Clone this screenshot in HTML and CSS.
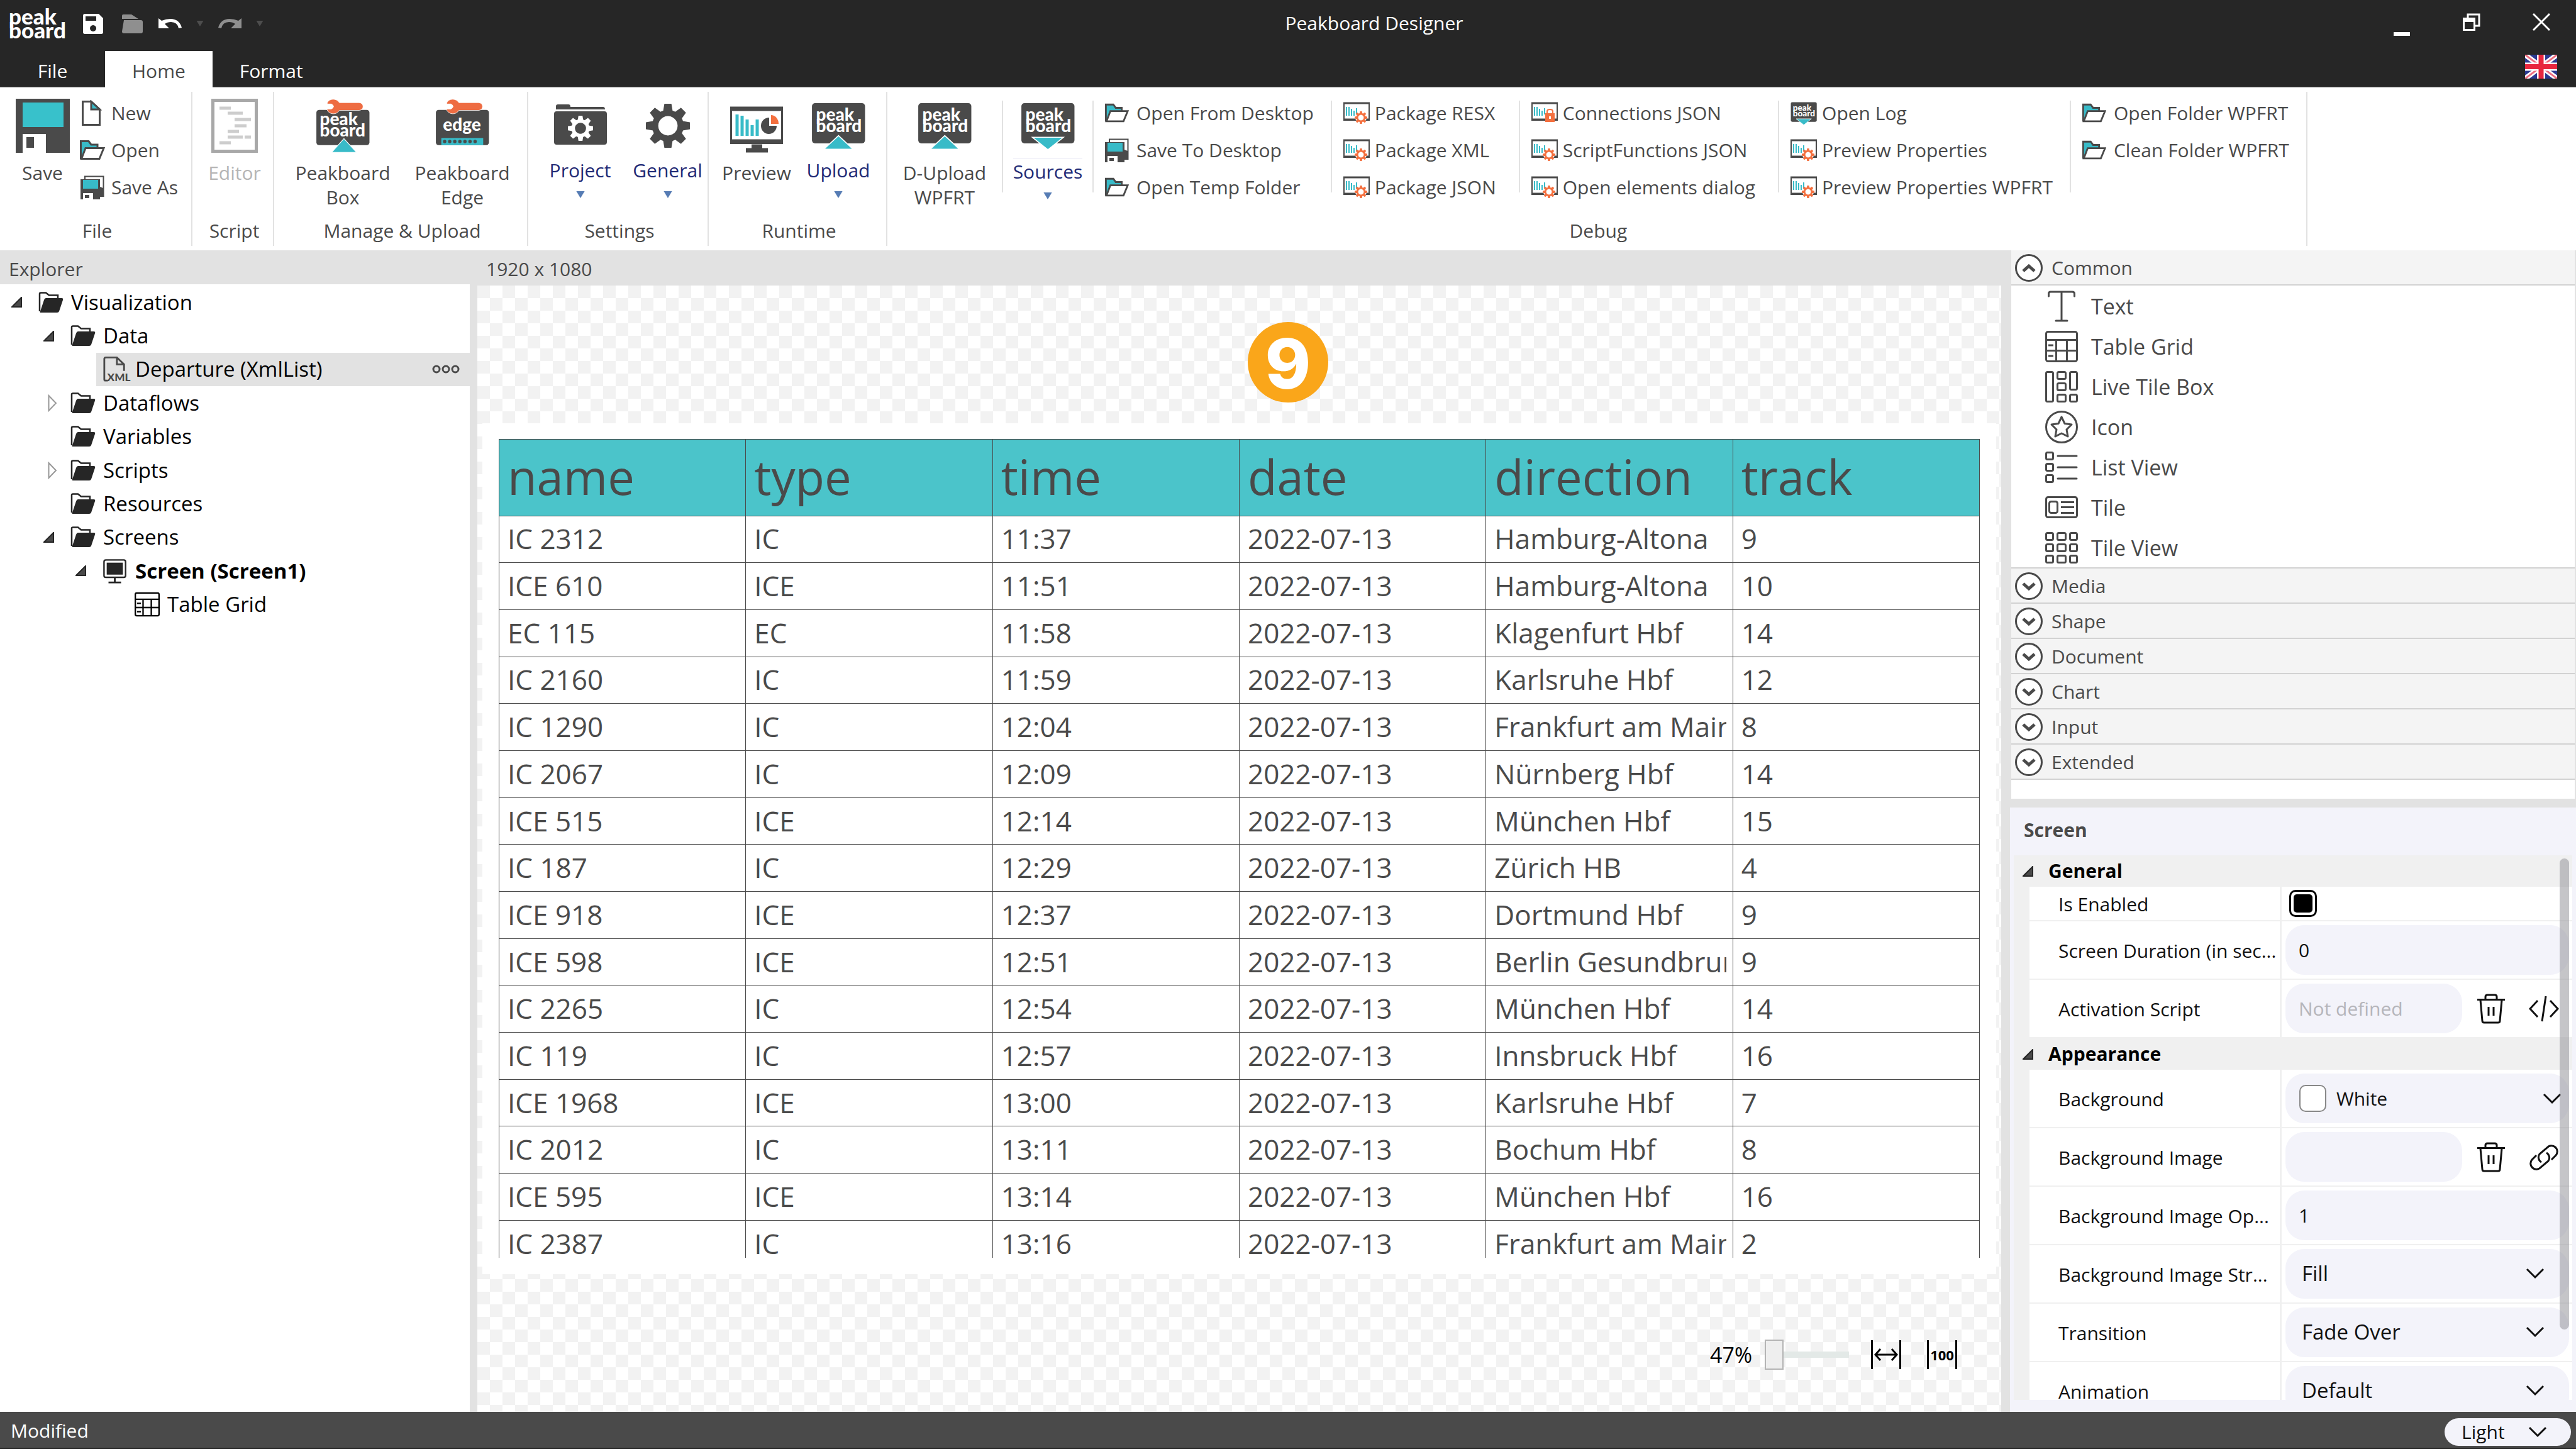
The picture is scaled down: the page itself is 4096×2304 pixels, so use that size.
FILE: index.html
```html
<!DOCTYPE html>
<html lang="en">
<head>
<meta charset="utf-8">
<title>Peakboard Designer</title>
<link rel="stylesheet" href="styles.css">
</head>
<body>
<svg class="sprite" aria-hidden="true">
  <symbol id="logo" viewBox="0 0 92 50">
    <g class="logo-text"><text x="-1" y="26">peak</text><text x="-1" y="48">board</text></g>
  </symbol>
  <symbol id="floppy-white" viewBox="0 0 32 32"><path fill="#fff" fill-rule="evenodd" d="M3 0H25L32 7V29Q32 32 29 32H3Q0 32 0 29V3Q0 0 3 0ZM4 4V11H21V4ZM16 18A5 5 0 1 0 16.100 18Z"/></symbol>
  <symbol id="doc-gray" viewBox="0 0 33 32"><path fill="#8f8f8f" d="M0 3Q0 1 2 1H15L26 8H0ZM3 10H30Q33 10 33 13V28Q33 31 30 31H3Q0 31 0 28Z"/></symbol>
  <symbol id="undo" viewBox="0 0 37 17"><path fill="currentColor" d="M0 0L5 4Q12 1 19 1Q33 1 37 15L32 16Q30 6 20 6Q14 6 10 9L17 16H0Z"/></symbol>
  <symbol id="tri-down" viewBox="0 0 12 10"><path fill="currentColor" d="M0 0H12L6 10Z"/></symbol>
  <symbol id="gear" viewBox="-50 -50 100 100">
    <g fill="currentColor"><path fill-rule="evenodd" d="M0-36A36 36 0 1 1-.1-36ZM0-22A22 22 0 1 0 .1-22Z"/>
    <path id="tooth" d="M-11-32L-8-50H8L11-32Z"/><use href="#tooth" transform="rotate(45)"/><use href="#tooth" transform="rotate(90)"/><use href="#tooth" transform="rotate(135)"/><use href="#tooth" transform="rotate(180)"/><use href="#tooth" transform="rotate(225)"/><use href="#tooth" transform="rotate(270)"/><use href="#tooth" transform="rotate(315)"/></g>
  </symbol>
  <symbol id="save-big" viewBox="0 0 86 86"><path fill="#4a4a4a" d="M0 0H86V86H48V56H11V86H0Z"/><rect x="11" y="6" width="65" height="39" fill="#38c1cb"/><rect x="17" y="61" width="12" height="17" fill="#4a4a4a"/></symbol>
  <symbol id="new" viewBox="0 0 40 42"><path d="M4.500 2.500H18L31.500 15V39.500H4.500Z" fill="#fff" stroke="#4a4a4a" stroke-width="3"/><path d="M18 2.500V15H31.500Z" fill="#38bbc8" stroke="#4a4a4a" stroke-width="3"/></symbol>
  <symbol id="open" viewBox="0 0 40 32"><path d="M1.500 30V1.500H14L18 7H28V13" fill="#38bbc8" stroke="#4a4a4a" stroke-width="3"/><path d="M9 12.500H38L31 29.500H2.500Z" fill="#fff" stroke="#4a4a4a" stroke-width="3"/></symbol>
  <symbol id="save-as" viewBox="0 0 38 38"><path d="M7 7V1.500H36.500V33H31" fill="#fff" stroke="#4a4a4a" stroke-width="2"/><path fill="#4a4a4a" d="M0 6H31V18L36 20V33H31V38H20V28H4V38H0Z"/><rect x="4" y="7" width="24" height="14" fill="#38bbc8"/><rect x="7" y="31" width="7" height="5" fill="#4a4a4a"/></symbol>
  <symbol id="script-page" viewBox="0 0 74 86"><rect x="2.500" y="2.500" width="69" height="81" fill="#fff" stroke="#a8a8a8" stroke-width="5"/><path stroke="#cdcdcd" stroke-width="5" d="M13 15H31M26 23H50M37 33H63M37 43H56M26 52H44M26 61H50M53 61H63M13 70H31"/></symbol>
  <symbol id="wrench" viewBox="0 0 220 90"><path fill="#ee6c42" stroke="#fff" stroke-width="3" d="M5 26Q16 3 42 3Q66 4 78 23H195Q218 26 218 46Q218 66 195 69H78Q66 89 42 89Q16 88 5 66L8 61H30Q42 56 44 46Q42 35 30 31H8Z"/></symbol>
  <symbol id="pb-box" viewBox="84 50 320 320"><rect x="88" y="116" width="314" height="208" rx="16" fill="#4a4a4a"/><use href="#wrench" x="146" y="50" width="220" height="90"/><g class="box-text"><text x="108" y="208">peak</text><text x="108" y="273">board</text></g><path d="M251 286L179 367H325Z" fill="#38bbc8" stroke="#fff" stroke-width="4"/></symbol>
  <symbol id="pb-edge" viewBox="84 50 320 320"><rect x="88" y="116" width="314" height="208" rx="16" fill="#4a4a4a"/><use href="#wrench" x="146" y="50" width="220" height="90"/><g class="box-text"><text x="130" y="238">edge</text></g><path fill="#38bbc8" d="M120 283H368V324H120Z"/><path d="M140 303H350" stroke="#4a4a4a" stroke-width="20" stroke-linecap="round" stroke-dasharray="0 30"/></symbol>
  <symbol id="pb-up" viewBox="84 50 320 320"><rect x="88" y="76" width="314" height="238" rx="18" fill="#4a4a4a"/><g class="box-text"><text x="112" y="180">peak</text><text x="112" y="248">board</text></g><path d="M245 268L158 349H332Z" fill="#38bbc8" stroke="#fff" stroke-width="6"/></symbol>
  <symbol id="pb-down" viewBox="84 50 320 320"><rect x="88" y="76" width="314" height="238" rx="18" fill="#4a4a4a"/><g class="box-text"><text x="112" y="180">peak</text><text x="112" y="248">board</text></g><path d="M153 278H337L245 352Z" fill="#38bbc8" stroke="#fff" stroke-width="6"/></symbol>
  <symbol id="project" viewBox="0 0 84 86"><path fill="#4a4a4a" d="M3 17V12Q3 9 6 9H23Q26 9 26 13H78Q81 13 81 17ZM4 20H80Q84 20 84 24V69Q84 73 80 73H4Q0 73 0 69V24Q0 20 4 20Z"/><g color="#fff"><use href="#gear" x="22" y="27" width="40" height="40"/></g></symbol>
  <symbol id="general" viewBox="0 0 84 86"><g color="#4a4a4a"><use href="#gear" x="7" y="8" width="70" height="70"/></g></symbol>
  <symbol id="preview" viewBox="0 0 84 86"><rect x="1.500" y="15.500" width="81" height="55" fill="#fff" stroke="#4a4a4a" stroke-width="3"/><path stroke="#4a4a4a" stroke-width="7" d="M0 68H84M0 16H84M34 76H51M25 82H60"/><path stroke="#38bbc8" stroke-width="5" d="M11 25V59M19 27V59M27 33V59M35 42V59M43 33V59"/><path fill="#4a4a4a" d="M62 30V43H74A12.500 13 0 1 1 62 30Z"/><path fill="#f4703f" d="M65 26A12 14 0 0 1 77 40H65Z"/></symbol>
  <symbol id="report" viewBox="0 0 42 36"><rect x="1" y="2" width="40" height="27" fill="#fff" stroke="#4a4a4a" stroke-width="2"/><path stroke="#4a4a4a" stroke-width="3" d="M0 2H42M0 28H42"/><path stroke="#38bbc8" stroke-width="2" d="M5 8V22M9 8V22M13 11V22M17 14V22M21 10V20"/></symbol>
  <symbol id="report-gear" viewBox="0 0 42 36"><use href="#report" width="42" height="36"/><circle cx="28" cy="25" r="9" fill="#fff"/><g color="#f4703f"><use href="#gear" x="18" y="15" width="20" height="20"/></g></symbol>
  <symbol id="report-lock" viewBox="0 0 42 36"><use href="#report" width="42" height="36"/><rect x="22" y="18" width="15" height="14" fill="#f4703f"/><path d="M25 19V15Q25 12 29.500 12Q34 12 34 15V19" fill="none" stroke="#f4703f" stroke-width="2"/><rect x="28" y="23" width="3" height="4" fill="#fff"/></symbol>
  <symbol id="folder" viewBox="0 0 40 34"><path d="M2 31V3Q2 1.500 4 1.500H12L17 5.500H31V11" fill="none" stroke="#262626" stroke-width="2.500"/><path fill="#262626" d="M12 10H37Q40 10 39 13L33 31Q32 33 30 33H4Q2 33 3 31L9 13Q10 10 12 10Z"/></symbol>
  <symbol id="xml-doc" viewBox="0 0 40 42"><path d="M8 40H4Q2 40 2 38V4Q2 1.500 4.500 1.500H23L35 13V24M23 2V13H35" fill="none" stroke="#4a4a4a" stroke-width="3"/><text class="xml-text" x="7" y="41">XML</text></symbol>
  <symbol id="screen" viewBox="0 0 40 42"><rect x="1.500" y="2.500" width="36" height="29" rx="3" fill="none" stroke="#262626" stroke-width="2.500"/><rect x="6" y="7" width="27" height="20" fill="#262626"/><path stroke="#262626" stroke-width="3" d="M19.500 32V40M9 40H30"/></symbol>
  <symbol id="table" viewBox="0 0 52 50"><g fill="none" stroke="currentColor" stroke-width="3"><rect x="1.500" y="1.500" width="49" height="47" rx="3"/><path d="M2 14.500H50M2 31.500H50M17.500 15V48M34.500 15V48M5 23H13M5 40H13"/></g></symbol>
  <symbol id="text-t" viewBox="0 0 52 50"><path fill="none" stroke="currentColor" stroke-width="3" stroke-linecap="round" d="M5.500 9V5Q5.500 2 8.500 2H43Q46.500 2 46.500 5V9M26 2V48M17 48H35"/></symbol>
  <symbol id="live-tile" viewBox="0 0 52 50"><g fill="none" stroke="currentColor" stroke-width="3"><rect x="1.500" y="1.500" width="11" height="47" rx="2"/><rect x="19.500" y="1.500" width="13" height="11" rx="2"/><rect x="19.500" y="19.500" width="13" height="11" rx="2"/><rect x="19.500" y="37.500" width="13" height="11" rx="2"/><rect x="39.500" y="1.500" width="11" height="28" rx="2"/><rect x="39.500" y="37.500" width="11" height="11" rx="2"/></g></symbol>
  <symbol id="star" viewBox="0 0 52 52"><g fill="none" stroke="currentColor" stroke-width="3"><circle cx="26" cy="26" r="24.500"/><path stroke-linejoin="round" d="M26 10L31 20.500L42 22L34 30L36 41L26 36L16 41L18 30L10 22L21 20.500Z"/></g></symbol>
  <symbol id="list-view" viewBox="0 0 52 50"><g fill="none" stroke="currentColor" stroke-width="3"><rect x="1.500" y="1.500" width="11" height="11" rx="2"/><rect x="1.500" y="19.500" width="11" height="11" rx="2"/><rect x="1.500" y="37.500" width="11" height="11" rx="2"/><path stroke-linecap="round" d="M20 7H50M20 25H50M20 43H50"/></g></symbol>
  <symbol id="tile" viewBox="0 0 52 50"><g fill="none" stroke="currentColor" stroke-width="3"><rect x="1.500" y="8.500" width="49" height="32" rx="3"/><rect x="6.500" y="15.500" width="13" height="18" rx="3"/><path d="M25 16.500H46M25 24.500H46M25 33.500H46"/></g></symbol>
  <symbol id="tile-view" viewBox="0 0 52 50"><g fill="none" stroke="currentColor" stroke-width="3"><rect x="1.500" y="1.500" width="11" height="11" rx="2"/><rect x="1.500" y="19.500" width="11" height="11" rx="2"/><rect x="1.500" y="37.500" width="11" height="11" rx="2"/><rect x="19.500" y="1.500" width="13" height="11" rx="2"/><rect x="19.500" y="19.500" width="13" height="11" rx="2"/><rect x="19.500" y="37.500" width="13" height="11" rx="2"/><rect x="39.500" y="1.500" width="11" height="11" rx="2"/><rect x="39.500" y="19.500" width="11" height="11" rx="2"/><rect x="39.500" y="37.500" width="11" height="11" rx="2"/></g></symbol>
  <symbol id="circle-down" viewBox="0 0 44 44"><circle cx="22" cy="22" r="20.500" fill="#fff" stroke="#4a4a4a" stroke-width="3"/><path d="M13 18L22 26L31 18" fill="none" stroke="#4a4a4a" stroke-width="5"/></symbol>
  <symbol id="circle-up" viewBox="0 0 44 44"><circle cx="22" cy="22" r="20.500" fill="#fff" stroke="#4a4a4a" stroke-width="3"/><path d="M13 27L22 19L31 27" fill="none" stroke="#4a4a4a" stroke-width="5"/></symbol>
  <symbol id="chevron" viewBox="0 0 30 18"><path d="M2 2L15 15L28 2" fill="none" stroke="#111" stroke-width="3"/></symbol>
  <symbol id="trash" viewBox="0 0 44 48"><g fill="none" stroke="#111" stroke-width="3"><path d="M0 9.500H44M13 9V5Q13 2 16 2H28Q31 2 31 5V9M5 10L8 43Q8 46 11 46H33Q36 46 36 43L39 10M18 21V35M26 21V35"/></g></symbol>
  <symbol id="code" viewBox="0 0 48 44"><path d="M14 9L2 22L14 35M27 2L21 42M34 9L46 22L34 35" fill="none" stroke="#111" stroke-width="3"/></symbol>
  <symbol id="link" viewBox="0 0 48 44"><g fill="none" stroke="#111" stroke-width="3"><path d="M20 30A9 9 0 0 1 17 17L29 7A9 9 0 0 1 43 19L36 26M28 15A9 9 0 0 1 31 28L19 38A9 9 0 0 1 5 26L12 19"/></g></symbol>
  <symbol id="fit" viewBox="0 0 48 46"><path d="M1.500 0V46M46.500 0V46M7 23H41M15 14L7 23L15 32M33 14L41 23L33 32" fill="none" stroke="#000" stroke-width="3"/></symbol>
  <symbol id="open-node" viewBox="0 0 17 17"><path d="M16 1V16H1Z" fill="#4a4a4a" stroke="#262626" stroke-width="2"/></symbol>
  <symbol id="closed-node" viewBox="-7 0 22 28"><path d="M1.500 2V26L13 14Z" fill="#fff" stroke="#999" stroke-width="2"/></symbol>
</svg>

<header class="titlebar">
  <div class="quick-access">
    <svg class="logo" role="img" aria-label="Peakboard"><use href="#logo"/></svg>
    <div class="file-tools">
      <button aria-label="Save"><svg width="32" height="32"><use href="#floppy-white"/></svg></button>
      <button aria-label="Close file"><svg width="33" height="32"><use href="#doc-gray"/></svg></button>
    </div>
    <div class="history-tools">
      <button aria-label="Undo"><svg width="37" height="17"><use href="#undo"/></svg></button>
      <button class="dim" aria-label="Undo list"><svg width="12" height="9"><use href="#tri-down"/></svg></button>
      <button class="redo" aria-label="Redo"><svg width="37" height="17"><use href="#undo"/></svg></button>
      <button class="dim" aria-label="Redo list"><svg width="12" height="9"><use href="#tri-down"/></svg></button>
    </div>
  </div>
  <h1>Peakboard Designer</h1>
  <div class="window-buttons">
    <button aria-label="Minimize"><svg width="28" height="28" viewBox="0 0 28 28"><path d="M1 33H27" stroke="#fff" stroke-width="6"/></svg></button>
    <button aria-label="Restore"><svg width="28" height="28" viewBox="0 0 28 28"><path d="M8 8V2H26V20H20" fill="none" stroke="#fff" stroke-width="3"/><path d="M0 7H20V28H0ZM3 14V25H17V14Z" fill="#fff" fill-rule="evenodd"/></svg></button>
    <button aria-label="Close"><svg width="28" height="28" viewBox="0 0 28 28"><path d="M1 1L27 27M27 1L1 27" stroke="#fff" stroke-width="3"/></svg></button>
  </div>
</header>

<nav class="tabs">
  <button class="tab tab-file">File</button>
  <button class="tab active">Home</button>
  <button class="tab">Format</button>
  <button class="language" aria-label="English"><svg width="51" height="38" viewBox="0 0 51 38"><rect width="51" height="38" fill="#2b3990"/><path d="M0 0L51 38M51 0L0 38" stroke="#fff" stroke-width="8"/><path d="M0 0L51 38M51 0L0 38" stroke="#ed6d80" stroke-width="3"/><path d="M25.500 0V38M0 19H51" stroke="#fff" stroke-width="13"/><path d="M25.500 0V38M0 19H51" stroke="#e8273f" stroke-width="8"/></svg></button>
</nav>

<section class="ribbon">
  <div class="group group-file">
    <div class="group-body">
      <button class="large"><svg class="big"><use href="#save-big"/></svg><span>Save</span></button>
      <div class="stack">
        <button class="small"><svg width="40" height="42"><use href="#new"/></svg>New</button>
        <button class="small"><svg width="40" height="32"><use href="#open"/></svg>Open</button>
        <button class="small"><svg width="40" height="38"><use href="#save-as"/></svg>Save As</button>
      </div>
    </div>
    <h2>File</h2>
  </div>
  <div class="group group-script">
    <div class="group-body"><button class="large" disabled><svg class="big"><use href="#script-page"/></svg><span>Editor</span></button></div>
    <h2>Script</h2>
  </div>
  <div class="group group-manage">
    <div class="group-body">
      <button class="large"><svg class="big"><use href="#pb-box"/></svg><span>Peakboard<br>Box</span></button>
      <button class="large"><svg class="big"><use href="#pb-edge"/></svg><span>Peakboard<br>Edge</span></button>
    </div>
    <h2>Manage &amp; Upload</h2>
  </div>
  <div class="group group-settings">
    <div class="group-body">
      <button class="large menu"><svg class="big"><use href="#project"/></svg><span>Project</span><svg class="caret"><use href="#tri-down"/></svg></button>
      <button class="large menu"><svg class="big"><use href="#general"/></svg><span>General</span><svg class="caret"><use href="#tri-down"/></svg></button>
    </div>
    <h2>Settings</h2>
  </div>
  <div class="group group-runtime">
    <div class="group-body">
      <button class="large"><svg class="big"><use href="#preview"/></svg><span>Preview</span></button>
      <button class="large menu"><svg class="big"><use href="#pb-up"/></svg><span>Upload</span><svg class="caret"><use href="#tri-down"/></svg></button>
    </div>
    <h2>Runtime</h2>
  </div>
  <div class="group group-debug">
    <div class="group-body">
      <button class="large wide"><svg class="big"><use href="#pb-up"/></svg><span>D-Upload<br>WPFRT</span></button>
      <span class="rule"></span>
      <button class="large menu hovered"><svg class="big"><use href="#pb-down"/></svg><span>Sources</span><svg class="caret"><use href="#tri-down"/></svg></button>
      <span class="rule"></span>
      <div class="stack">
        <button class="small"><svg width="38" height="32"><use href="#open"/></svg>Open From Desktop</button>
        <button class="small"><svg width="38" height="38"><use href="#save-as"/></svg>Save To Desktop</button>
        <button class="small"><svg width="38" height="32"><use href="#open"/></svg>Open Temp Folder</button>
      </div>
      <span class="rule"></span>
      <div class="stack reports">
        <button class="small"><svg width="42" height="36"><use href="#report-gear"/></svg>Package RESX</button>
        <button class="small"><svg width="42" height="36"><use href="#report-gear"/></svg>Package XML</button>
        <button class="small"><svg width="42" height="36"><use href="#report-gear"/></svg>Package JSON</button>
      </div>
      <span class="rule"></span>
      <div class="stack reports">
        <button class="small"><svg width="42" height="36"><use href="#report-lock"/></svg>Connections JSON</button>
        <button class="small"><svg width="42" height="36"><use href="#report-gear"/></svg>ScriptFunctions JSON</button>
        <button class="small"><svg width="42" height="36"><use href="#report-gear"/></svg>Open elements dialog</button>
      </div>
      <span class="rule"></span>
      <div class="stack">
        <button class="small"><svg width="42" height="42"><use href="#pb-down"/></svg>Open Log</button>
        <button class="small"><svg width="42" height="36"><use href="#report-gear"/></svg>Preview Properties</button>
        <button class="small"><svg width="42" height="36"><use href="#report-gear"/></svg>Preview Properties WPFRT</button>
      </div>
      <span class="rule"></span>
      <div class="stack last">
        <button class="small"><svg width="38" height="32"><use href="#open"/></svg>Open Folder WPFRT</button>
        <button class="small"><svg width="38" height="32"><use href="#open"/></svg>Clean Folder WPFRT</button>
      </div>
    </div>
    <h2>Debug</h2>
  </div>
</section>

<main class="workspace">
  <aside class="explorer">
    <h2 class="pane-title">Explorer</h2>
    <ul class="tree">
      <li><span class="toggle"><svg width="17" height="17"><use href="#open-node"/></svg></span><svg class="node"><use href="#folder"/></svg>Visualization</li>
      <li class="l1"><span class="toggle"><svg width="17" height="17"><use href="#open-node"/></svg></span><svg class="node"><use href="#folder"/></svg>Data</li>
      <li class="l2 selected"><span class="toggle"></span><div class="row"><svg class="node"><use href="#xml-doc"/></svg>Departure (XmlList)<button class="more" aria-label="More"><svg width="44" height="16" viewBox="0 0 44 16"><g fill="none" stroke="#4a4a4a" stroke-width="3"><circle cx="7" cy="8" r="5"/><circle cx="22" cy="8" r="5"/><circle cx="37" cy="8" r="5"/></g></svg></button></div></li>
      <li class="l1"><span class="toggle"><svg width="22" height="28"><use href="#closed-node"/></svg></span><svg class="node"><use href="#folder"/></svg>Dataflows</li>
      <li class="l1"><span class="toggle"></span><svg class="node"><use href="#folder"/></svg>Variables</li>
      <li class="l1"><span class="toggle"><svg width="22" height="28"><use href="#closed-node"/></svg></span><svg class="node"><use href="#folder"/></svg>Scripts</li>
      <li class="l1"><span class="toggle"></span><svg class="node"><use href="#folder"/></svg>Resources</li>
      <li class="l1"><span class="toggle"><svg width="17" height="17"><use href="#open-node"/></svg></span><svg class="node"><use href="#folder"/></svg>Screens</li>
      <li class="l2 bold"><span class="toggle"><svg width="17" height="17"><use href="#open-node"/></svg></span><svg class="node"><use href="#screen"/></svg>Screen (Screen1)</li>
      <li class="l3"><span class="toggle"></span><svg class="node"><use href="#table"/></svg>Table Grid</li>
    </ul>
  </aside>

  <section class="canvas">
    <h2 class="pane-title">1920 x 1080</h2>
    <div class="stage">
      <div class="artboard">
        <div class="grid-clip">
          <table class="departures">
            <thead><tr><th>name</th><th>type</th><th>time</th><th>date</th><th>direction</th><th>track</th></tr></thead>
            <tbody>
              <tr><td>IC 2312</td><td>IC</td><td>11:37</td><td>2022-07-13</td><td>Hamburg-Altona</td><td>9</td></tr>
              <tr><td>ICE 610</td><td>ICE</td><td>11:51</td><td>2022-07-13</td><td>Hamburg-Altona</td><td>10</td></tr>
              <tr><td>EC 115</td><td>EC</td><td>11:58</td><td>2022-07-13</td><td>Klagenfurt Hbf</td><td>14</td></tr>
              <tr><td>IC 2160</td><td>IC</td><td>11:59</td><td>2022-07-13</td><td>Karlsruhe Hbf</td><td>12</td></tr>
              <tr><td>IC 1290</td><td>IC</td><td>12:04</td><td>2022-07-13</td><td><div>Frankfurt am Main</div></td><td>8</td></tr>
              <tr><td>IC 2067</td><td>IC</td><td>12:09</td><td>2022-07-13</td><td>Nürnberg Hbf</td><td>14</td></tr>
              <tr><td>ICE 515</td><td>ICE</td><td>12:14</td><td>2022-07-13</td><td>München Hbf</td><td>15</td></tr>
              <tr><td>IC 187</td><td>IC</td><td>12:29</td><td>2022-07-13</td><td>Zürich HB</td><td>4</td></tr>
              <tr><td>ICE 918</td><td>ICE</td><td>12:37</td><td>2022-07-13</td><td>Dortmund Hbf</td><td>9</td></tr>
              <tr><td>ICE 598</td><td>ICE</td><td>12:51</td><td>2022-07-13</td><td><div>Berlin Gesundbrunnen</div></td><td>9</td></tr>
              <tr><td>IC 2265</td><td>IC</td><td>12:54</td><td>2022-07-13</td><td>München Hbf</td><td>14</td></tr>
              <tr><td>IC 119</td><td>IC</td><td>12:57</td><td>2022-07-13</td><td>Innsbruck Hbf</td><td>16</td></tr>
              <tr><td>ICE 1968</td><td>ICE</td><td>13:00</td><td>2022-07-13</td><td>Karlsruhe Hbf</td><td>7</td></tr>
              <tr><td>IC 2012</td><td>IC</td><td>13:11</td><td>2022-07-13</td><td>Bochum Hbf</td><td>8</td></tr>
              <tr><td>ICE 595</td><td>ICE</td><td>13:14</td><td>2022-07-13</td><td>München Hbf</td><td>16</td></tr>
              <tr><td>IC 2387</td><td>IC</td><td>13:16</td><td>2022-07-13</td><td><div>Frankfurt am Main</div></td><td>2</td></tr>
            </tbody>
          </table>
        </div>
      </div>
      <div class="zoom-bar">
        <label for="zoom">47%</label>
        <input id="zoom" type="range" min="47" max="400" value="47">
        <button aria-label="Fit width"><svg width="48" height="46"><use href="#fit"/></svg></button>
        <button class="actual-size">100</button>
      </div>
    </div>
  </section>

  <aside class="side">
    <div class="toolbox">
      <button class="category"><svg width="44" height="44"><use href="#circle-up"/></svg>Common</button>
      <div class="tools">
        <button><svg width="52" height="50"><use href="#text-t"/></svg>Text</button>
        <button><svg width="52" height="50"><use href="#table"/></svg>Table Grid</button>
        <button><svg width="52" height="50"><use href="#live-tile"/></svg>Live Tile Box</button>
        <button><svg width="52" height="52"><use href="#star"/></svg>Icon</button>
        <button><svg width="52" height="50"><use href="#list-view"/></svg>List View</button>
        <button><svg width="52" height="50"><use href="#tile"/></svg>Tile</button>
        <button><svg width="52" height="50"><use href="#tile-view"/></svg>Tile View</button>
      </div>
      <button class="category"><svg width="44" height="44"><use href="#circle-down"/></svg>Media</button>
      <button class="category"><svg width="44" height="44"><use href="#circle-down"/></svg>Shape</button>
      <button class="category"><svg width="44" height="44"><use href="#circle-down"/></svg>Document</button>
      <button class="category"><svg width="44" height="44"><use href="#circle-down"/></svg>Chart</button>
      <button class="category"><svg width="44" height="44"><use href="#circle-down"/></svg>Input</button>
      <button class="category"><svg width="44" height="44"><use href="#circle-down"/></svg>Extended</button>
    </div>
    <div class="inspector">
      <h2>Screen</h2>
      <div class="properties">
        <h3><svg width="17" height="17"><use href="#open-node"/></svg>General</h3>
        <div class="prop short"><label for="enabled">Is Enabled</label><div class="value"><input id="enabled" type="checkbox" checked></div></div>
        <div class="prop"><label for="duration">Screen Duration (in sec...</label><div class="value"><input id="duration" class="field" type="text" value="0"></div></div>
        <div class="prop"><label for="script">Activation Script</label><div class="value"><input id="script" class="field" type="text" placeholder="Not defined"><button aria-label="Delete"><svg width="44" height="48"><use href="#trash"/></svg></button><button aria-label="Edit script"><svg width="48" height="44"><use href="#code"/></svg></button></div></div>
        <h3><svg width="17" height="17"><use href="#open-node"/></svg>Appearance</h3>
        <div class="prop"><label for="background">Background</label><div class="value"><div class="field color"><span class="swatch"></span><select id="background"><option>White</option></select><svg width="30" height="18"><use href="#chevron"/></svg></div></div></div>
        <div class="prop"><label for="image">Background Image</label><div class="value"><input id="image" class="field" type="text"><button aria-label="Delete"><svg width="44" height="48"><use href="#trash"/></svg></button><button aria-label="Link image"><svg width="48" height="44"><use href="#link"/></svg></button></div></div>
        <div class="prop"><label for="opacity">Background Image Op...</label><div class="value"><input id="opacity" class="field" type="text" value="1"></div></div>
        <div class="prop"><label for="stretch">Background Image Str...</label><div class="value"><div class="field"><select id="stretch"><option>Fill</option></select><svg width="30" height="18"><use href="#chevron"/></svg></div></div></div>
        <div class="prop"><label for="transition">Transition</label><div class="value"><div class="field"><select id="transition"><option>Fade Over</option></select><svg width="30" height="18"><use href="#chevron"/></svg></div></div></div>
        <div class="prop"><label for="animation">Animation</label><div class="value"><div class="field"><select id="animation"><option>Default</option></select><svg width="30" height="18"><use href="#chevron"/></svg></div></div></div>
        <span class="scroll-thumb"></span>
      </div>
    </div>
  </aside>
</main>

<footer class="statusbar">
  <span>Modified</span>
  <div class="theme"><select aria-label="Theme"><option>Light</option></select><svg width="30" height="18"><use href="#chevron"/></svg></div>
</footer>
<div class="step-badge">9</div>
</body>
</html>
```
FILE: styles.css
```css
* { box-sizing: border-box; }

body {
  margin: 0;
  height: 100vh;
  display: grid;
  grid-template-rows: 81px 58px 259px minmax(0, 1fr) 59px;
  position: relative;
  overflow: hidden;
  background: #e2e2e2;
  color: #4a4a4a;
  font: 30px/40px "Open Sans", "Noto Sans", sans-serif;
}

h1, h2, h3, ul { margin: 0; padding: 0; font: inherit; }
ul { list-style: none; }
svg { display: block; flex: none; }
button { margin: 0; padding: 0; border: 0; background: none; color: inherit; font: inherit; }
select, input { margin: 0; font: inherit; color: #111; }
select { appearance: none; border: 0; padding: 0; background: none; flex: 1; min-width: 0; }
.sprite { position: absolute; width: 0; height: 0; }
symbol, .logo, .big, .node { overflow: visible; }
.logo-text, .box-text, .xml-text { font-family: Lato, sans-serif; font-weight: 900; }
.logo-text { font-size: 35px; fill: #fff; }
.box-text { font-size: 104px; fill: #fff; }
.xml-text { font-size: 18px; fill: #4a4a4a; }

/* title bar */
.titlebar { display: flex; background: #262626; color: #fff; }
.quick-access { width: 607px; padding-left: 15px; display: flex; align-items: center; gap: 25px; padding-bottom: 6px; }
.logo { width: 92px; height: 50px; }
.file-tools { display: flex; gap: 30px; }
.history-tools { display: flex; align-items: center; gap: 23px; }
.redo { color: #8f8f8f; transform: scaleX(-1); }
.dim { color: #4d4d4d; }
.titlebar h1 { flex: 1; text-align: center; line-height: 74px; }
.window-buttons { display: flex; }
.window-buttons button { width: 111px; display: grid; place-items: center; padding-bottom: 12px; }
.window-buttons svg { overflow: visible; }

/* tabs */
.tabs { display: flex; background: #262626; border-bottom: 1px solid #777; color: #fff; }
.tab { padding: 6px 43px 0; margin-bottom: -1px; }
.tab-file { width: 167px; padding: 6px 0 0; }
.tab.active { background: #fff; color: #4a4a4a; }
.language { margin: 6px 30px 0 auto; align-self: start; }

/* ribbon */
.ribbon { display: flex; background: #fff; padding: 7px 0; }
.group { display: flex; flex-direction: column; border-right: 2px solid #e2e2e2; }
.group-body { flex: 1; display: flex; justify-content: center; }
.group h2 { text-align: center; height: 44px; padding-left: 5px; }
.group-file { width: 306px; }
.group-file .group-body { justify-content: flex-start; padding-left: 8px; }
.group-script { width: 130px; }
.group-manage { width: 404px; }
.group-script .group-body, .group-manage .group-body { padding-left: 6px; }
.group-settings { width: 287px; }
.group-settings .group-body { justify-content: flex-start; padding-left: 13px; }
.group-runtime { width: 284px; }
.large { display: flex; flex-direction: column; align-items: center; flex: none; width: 130px; padding-top: 11px; line-height: 39px; }
.group-file .large { width: 119px; }
.group-script .large { width: 124px; }
.group-manage .large { width: 190px; }
.group-settings .large { width: 139px; }
.large.wide { width: 182px; }
.large.hovered { width: 142px; }
.large:disabled { color: #b5b5b5; }
.big { width: 86px; height: 86px; margin-bottom: 12px; }
.menu .big { margin-bottom: 8px; }
.menu { color: #1f2a75; }
.hovered span { border-top: 2px solid #f3f3fa; }
.caret { width: 18px; height: 11px; margin-top: 14px; color: #567cb4; }
.rule { width: 2px; height: 146px; margin-top: 14px; background: #e2e2e2; flex: none; }
.stack { display: flex; flex-direction: column; padding-top: 4px; }
.small { display: grid; grid-template-columns: 42px auto; justify-content: start; column-gap: 8px; align-items: center; height: 59px; text-align: left; white-space: nowrap; }
.group-debug .stack { padding: 4px 27px 0 18px; }
.group-debug .reports { padding-right: 36px; }

/* workspace */
.workspace { display: grid; grid-template-columns: 747px minmax(0, 1fr) 900px; column-gap: 12px; }
.pane-title { height: 56px; padding: 10px 14px; }
.explorer { background: #fff; }
.explorer .pane-title { background: #e2e2e2; height: 54px; }

.tree { display: grid; grid-auto-rows: 1fr; height: 534px; margin-top: 2px; color: #000; font-size: 33px; }
.tree li { display: flex; align-items: center; padding-left: 10px; }
.tree .l1 { padding-left: 61px; }
.tree .l2 { padding-left: 112px; }
.tree .l3 { padding-left: 163px; }
.toggle { width: 41px; height: 28px; display: grid; place-items: center start; padding-left: 8px; flex: none; }
.node { width: 40px; height: 40px; margin: 0 12px 0 10px; }
.selected .row { flex: 1; align-self: stretch; display: flex; align-items: center; background: #e2e2e2; }
.more { margin: 0 16px 0 auto; }
.bold { font-weight: 700; }

.canvas { display: flex; flex-direction: column; margin-right: 2px; min-height: 0; }
.stage {
  flex: 1;
  min-height: 0;
  position: relative;
  display: flex;
  flex-direction: column;
  justify-content: center;
  padding: 0 8px;
  background: repeating-conic-gradient(#fff 0 25%, #f2f2f2 0 50%) 0 0 / 40px 40px;
}
.artboard { aspect-ratio: 16 / 9; min-height: 0; display: flex; flex-direction: column; background: #fff; padding: 25px 26px 26px; }
.grid-clip { flex: 1 1 0; min-height: 0; overflow: hidden; }
.departures { width: 100%; height: 1318px; table-layout: fixed; border-collapse: collapse; }
.departures th, .departures td { border: 1px solid #4a4a4a; padding: 0 10px 0 13px; text-align: left; white-space: nowrap; }
.departures th { height: 122px; background: #4bc4ca; font-size: 76px; font-weight: 400; line-height: 100px; padding-bottom: 2px; }
.departures td { font-size: 44px; line-height: 60px; padding-bottom: 2px; }
.departures td div { overflow: hidden; }
.zoom-bar { position: absolute; right: 70px; bottom: 66px; display: flex; align-items: center; color: #000; font-size: 34px; height: 50px; }
.zoom-bar input { appearance: none; width: 134px; height: 48px; margin: 0 35px 0 20px; background: linear-gradient(#e3e9e7, #e3e9e7) center / 100% 10px no-repeat; }
.zoom-bar input::-webkit-slider-thumb { appearance: none; width: 30px; height: 48px; background: #eee; border: 2px solid #b4b4b4; }
.zoom-bar .actual-size { margin-left: 41px; width: 48px; height: 46px; border: solid #000; border-width: 0 3px; font-size: 22px; font-weight: 700; }

/* toolbox */
.side { display: flex; flex-direction: column; min-height: 0; }
.toolbox { background: #fff; margin: 0 2px 0; height: 872px; display: flex; flex-direction: column; }
.category { height: 56px; flex: none; display: flex; align-items: center; gap: 14px; padding: 2px 0 0 6px; background: #f4f4f4; border-bottom: 2px solid #d2d2d2; }
.tools { border-bottom: 2px solid #d2d2d2; }
.tools button { display: flex; align-items: center; gap: 21px; width: 100%; height: 64px; padding: 2px 0 0 54px; font-size: 34px; }

/* property inspector */
.inspector { flex: 1; min-height: 0; margin-top: 14px; display: flex; flex-direction: column; background: #f3f3fa; padding: 0 6px 19px; }
.inspector h2 { height: 76px; padding: 16px; font-weight: 700; }
.properties { position: relative; flex: 1; min-height: 0; overflow: hidden; background: #f0f0f0; padding-left: 25px; color: #111; }
.properties h3 { display: flex; align-items: center; height: 50px; margin-left: -11px; gap: 24px; font-weight: 700; color: #000; }
.prop { display: grid; grid-template-columns: 398px minmax(0, 1fr); column-gap: 3px; height: 93px; border-bottom: 2px solid #f0f0f0; }
.prop.short { height: 55px; }
.prop > * { background: #fff; }
.prop label { display: flex; align-items: center; padding: 2px 0 0 46px; white-space: nowrap; }
.value { display: flex; align-items: center; padding: 0 5px 0 6px; }
.value button { margin-left: 24px; }
.value button + button { margin: 0 16px 0 38px; }
.field { display: flex; align-items: center; flex: 1; width: 0; height: 79px; border: 0; border-radius: 30px; background: #f3f3fa; padding: 0 21px; }
div.field { font-size: 33px; padding: 0 39px 2px 26px; }
div.color { font-size: 30px; padding: 0 12px 0 22px; }
.field::placeholder { color: #b5b5ba; opacity: 1; }
.swatch { width: 43px; height: 43px; margin-right: 16px; border: 2px solid #888; border-radius: 10px; background: #fff; }
.value input[type="checkbox"] { appearance: none; width: 44px; height: 43px; margin-left: 6px; border: 3px solid #000; border-radius: 10px; background: #fff; padding: 4px; }
.value input[type="checkbox"]:checked::before { content: ""; display: block; height: 100%; border-radius: 5px; background: #000; }
.scroll-thumb { position: absolute; top: 5px; right: 5px; width: 15px; height: 749px; border-radius: 8px; background: rgb(140 140 145 / 50%); }

/* status bar */
.statusbar { display: flex; align-items: center; justify-content: space-between; background: #4a4a4a; color: #fff; padding: 2px 8px 0 17px; border-bottom: 2px solid #262626; }
.theme { display: flex; align-items: center; width: 201px; height: 44px; margin-top: 4px; padding: 0 38px 0 27px; border-radius: 22px; background: #f3f3fa; }

.step-badge {
  position: absolute;
  left: 50%;
  top: 512px;
  width: 128px;
  height: 128px;
  margin-left: -64px;
  border-radius: 50%;
  background: #faa61a;
  color: #fff;
  font: 800 110px/132px Inter, sans-serif;
  text-align: center;
}
```
